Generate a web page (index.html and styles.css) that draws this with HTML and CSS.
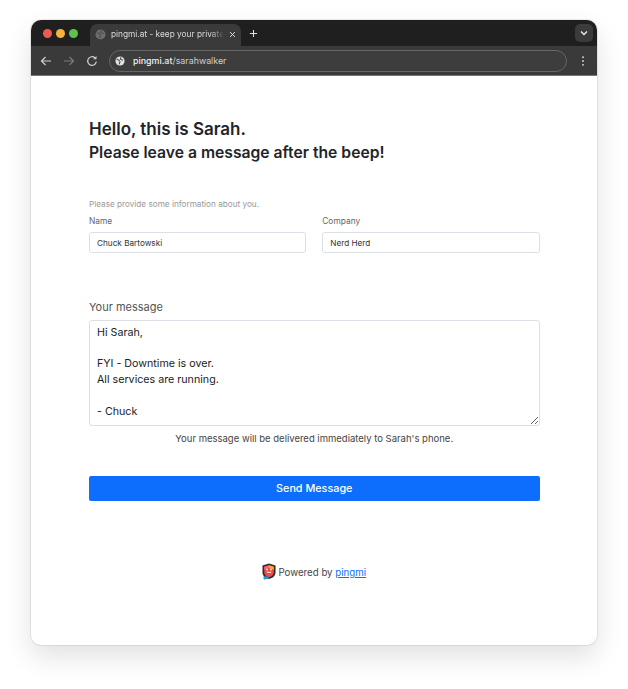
FILE: index.html
```html
<!DOCTYPE html>
<html lang="en">
<head>
<meta charset="utf-8">
<title>pingmi.at</title>
<link rel="stylesheet" href="styles.css">
</head>
<body>
<div class="window">
  <div class="tabstrip">
    <div class="lights"><span class="light red"></span><span class="light yellow"></span><span class="light green"></span></div>
    <div class="tab">
      <svg class="favicon" viewBox="0 0 12 12"><circle cx="6" cy="6" r="5.500" fill="#6b6d70"/><path d="M2 4l3 1 1 2-1 3M7 1.500L6.500 4l3 1" stroke="#4a4b4d" stroke-width="1.200" fill="none"/></svg>
      <span class="tab-title">pingmi.at - keep your private</span>
      <svg class="tab-close" viewBox="0 0 8 8"><path d="M1.200 1.200l5.600 5.600M6.800 1.200l-5.600 5.600" stroke="#e4e4e4" stroke-width="1.100"/></svg>
    </div>
    <svg class="newtab" viewBox="0 0 10 10"><path d="M5 1v8M1 5h8" stroke="#dedede" stroke-width="1.200"/></svg>
    <div class="tab-menu"><svg viewBox="0 0 8 6"><path d="M1 1.500l3 3 3-3" stroke="#eee" stroke-width="1.300" fill="none"/></svg></div>
  </div>
  <div class="toolbar">
    <svg class="nav" viewBox="0 0 12 12"><path d="M11 6H1.500M5.500 2L1.500 6l4 4" stroke="#d0d0d0" stroke-width="1.200" fill="none"/></svg>
    <svg class="nav" viewBox="0 0 12 12"><path d="M1 6h9.500M6.500 2l4 4-4 4" stroke="#7b7b7b" stroke-width="1.200" fill="none"/></svg>
    <svg class="nav" viewBox="0 0 12 12"><path d="M10.300 6.500A4.300 4.300 0 1 1 9 2.900" stroke="#d0d0d0" stroke-width="1.200" fill="none"/><path d="M10.500 1v3.300H7.200z" fill="#d0d0d0"/></svg>
    <div class="omnibox">
      <svg class="globe" viewBox="0 0 12 12"><circle cx="6" cy="6" r="5.500" fill="#e0e0e0"/><path d="M2 4l3 1 1 2-1 3M7 1.500L6.500 4l3 1" stroke="#3a3a3a" stroke-width="1.200" fill="none"/></svg>
      <span class="url"><span class="host">pingmi.at</span>/sarahwalker</span>
    </div>
    <svg class="kebab" viewBox="0 0 4 14"><circle cx="2" cy="2.500" r="1.100" fill="#d8d8d8"/><circle cx="2" cy="7" r="1.100" fill="#d8d8d8"/><circle cx="2" cy="11.500" r="1.100" fill="#d8d8d8"/></svg>
  </div>
  <main class="page">
    <h1 class="hello">Hello, this is Sarah.</h1>
    <h2 class="beep">Please leave a message after the beep!</h2>
    <p class="hint">Please provide some information about you.</p>
    <div class="fields">
      <div class="field">
        <label class="field-label" for="name">Name</label>
        <input class="input" id="name" value="Chuck Bartowski">
      </div>
      <div class="field">
        <label class="field-label" for="company">Company</label>
        <input class="input" id="company" value="Nerd Herd">
      </div>
    </div>
    <label class="msg-label" for="msg">Your message</label>
    <textarea class="msg" id="msg">Hi Sarah,

FYI - Downtime is over.
All services are running.

- Chuck</textarea>
    <p class="note">Your message will be delivered immediately to Sarah's phone.</p>
    <button class="send" type="button">Send Message</button>
    <footer class="powered">
      <svg class="logo" viewBox="0 0 14 18"><path d="M7 .5l6.500 2v7c0 3.500-2.800 5.500-6.500 6.500-3.700-1-6.500-3-6.500-6.500v-7z" fill="#2b2b33"/><path d="M7 2.300l4.800 1.500v5.400c0 2.600-2 4.100-4.800 5-2.800-.9-4.800-2.400-4.800-5V3.800z" fill="#f0483e"/><path d="M7 2.300l4.800 1.500v3L7 5z" fill="#f7b32b"/><path d="M2.200 3.800L7 2.300V5L2.200 6.800z" fill="#f4667c"/><rect x="4.300" y="5.800" width="1.500" height="1.500" fill="#fff"/><rect x="8.200" y="5.800" width="1.500" height="1.500" fill="#fff"/><path d="M4.800 9.300h4.400" stroke="#fff" stroke-width="1"/><path d="M1.500 13.500h5v2.500h-3l-1 1.500v-1.500h-1z" fill="#1f9bd8"/></svg>
      <span>Powered by <a class="link" href="#">pingmi</a></span>
    </footer>
  </main>
</div>
</body>
</html>
```
FILE: styles.css
```css
* { box-sizing: border-box; }
html, body { margin: 0; background: #fff; }
body {
  padding: 20px 31px 44px;
  font-family: Inter, "Open Sans", sans-serif;
  color: #333;
}
.window {
  height: 625px;
  display: flex;
  flex-direction: column;
  border-radius: 10px;
  overflow: hidden;
  background: #fff;
  box-shadow: 0 0 0 1px rgba(0,0,0,.07), 0 12px 28px rgba(0,0,0,.12);
}
.tabstrip {
  height: 26px;
  background: #1f1f1f;
  display: flex;
  align-items: flex-end;
  padding-left: 13px;
}
.lights { display: flex; gap: 4px; align-self: center; margin-right: 12px; margin-left: -1px; }
.light { width: 9px; height: 9px; border-radius: 50%; }
.red { background: #ee5a52; }
.yellow { background: #f3b33b; }
.green { background: #5fc24e; }
.tab {
  width: 151px;
  height: 22px;
  background: #3a3a3a;
  border-radius: 7px 7px 0 0;
  display: flex;
  align-items: center;
  padding: 0 9px 2px 5px;
  gap: 5px;
  font-size: 8.300px;
  color: #dcdcdc;
}
.favicon { width: 11px; height: 11px; flex: none; }
.tab-title {
  flex: 1;
  white-space: nowrap;
  -webkit-mask-image: linear-gradient(to right, #000 88%, transparent 100%);
  mask-image: linear-gradient(to right, #000 88%, transparent 100%);
}
.tab-close { width: 7px; height: 7px; flex: none; }
.newtab { width: 9px; height: 9px; align-self: center; margin: 0 0 0 8px; }
.tab-menu {
  margin-left: auto;
  margin-right: 4px;
  align-self: center;
  width: 18px;
  height: 18px;
  border-radius: 5px;
  background: #3b3b3b;
  display: flex;
  align-items: center;
  justify-content: center;
}
.tab-menu svg { width: 8px; height: 6px; }
.toolbar {
  height: 30px;
  background: #3a3a3a;
  border-bottom: 1px solid #777;
  display: flex;
  align-items: center;
  padding-left: 9px;
  gap: 11px;
}
.nav { width: 12px; height: 12px; flex: none; }
.omnibox {
  width: 458px;
  height: 22px;
  border-radius: 11px;
  background: #3d3d3d;
  border: 1px solid #666;
  display: flex;
  align-items: center;
  padding-left: 5px;
  gap: 8px;
  font-size: 8.900px;
  color: #cfcfcf;
}
.globe { width: 10px; height: 10px; flex: none; }
.host { color: #f2f2f2; font-weight: 500; }
.kebab { width: 4px; height: 12px; margin-left: 3px; flex: none; }
.page {
  flex: 1;
  padding: 42px 57.500px 0 58px;
  display: flex;
  flex-direction: column;
}
.hello { margin: 0; font-size: 17px; line-height: 23px; font-weight: 600; color: #212529; }
.beep { margin: 0; font-size: 15.700px; line-height: 23px; font-weight: 600; color: #212529; }
.hint { margin: 34px 0 0; font-size: 8.200px; line-height: 12px; color: #999; }
.fields { display: flex; gap: 16px; margin-top: 5px; }
.field { flex: 1; display: flex; flex-direction: column; }
.field-label { font-size: 8.400px; line-height: 12px; color: #666; margin-bottom: 5px; }
.input {
  height: 21px;
  width: 100%;
  border: 1px solid #dcdfe6;
  border-radius: 3px;
  padding: 0 7px;
  font: 8.200px Inter, sans-serif;
  color: #333;
  background: #fff;
}
.msg-label { margin-top: 46px; font-size: 11px; line-height: 16px; color: #555; }
.msg {
  margin-top: 5px;
  width: 100%;
  height: 106px;
  border: 1px solid #dcdfe6;
  border-radius: 3px;
  padding: 4px 7px;
  font: 10.700px/15.700px Inter, sans-serif;
  color: #222;
  overflow: hidden;
}
.note { margin: 6px 0 0; text-align: center; font-size: 9.500px; line-height: 14px; color: #444; }
.send {
  margin-top: 30px;
  height: 25px;
  border: 0;
  border-radius: 2px;
  background: #0d6efd;
  color: #fff;
  font: 500 10.800px Inter, sans-serif;
}
.powered {
  margin-top: 62px;
  display: flex;
  justify-content: center;
  align-items: center;
  gap: 2px;
  font-size: 9.700px;
  color: #444;
}
.logo { width: 14px; height: 18px; }
.link { color: #0d6efd; }
```
